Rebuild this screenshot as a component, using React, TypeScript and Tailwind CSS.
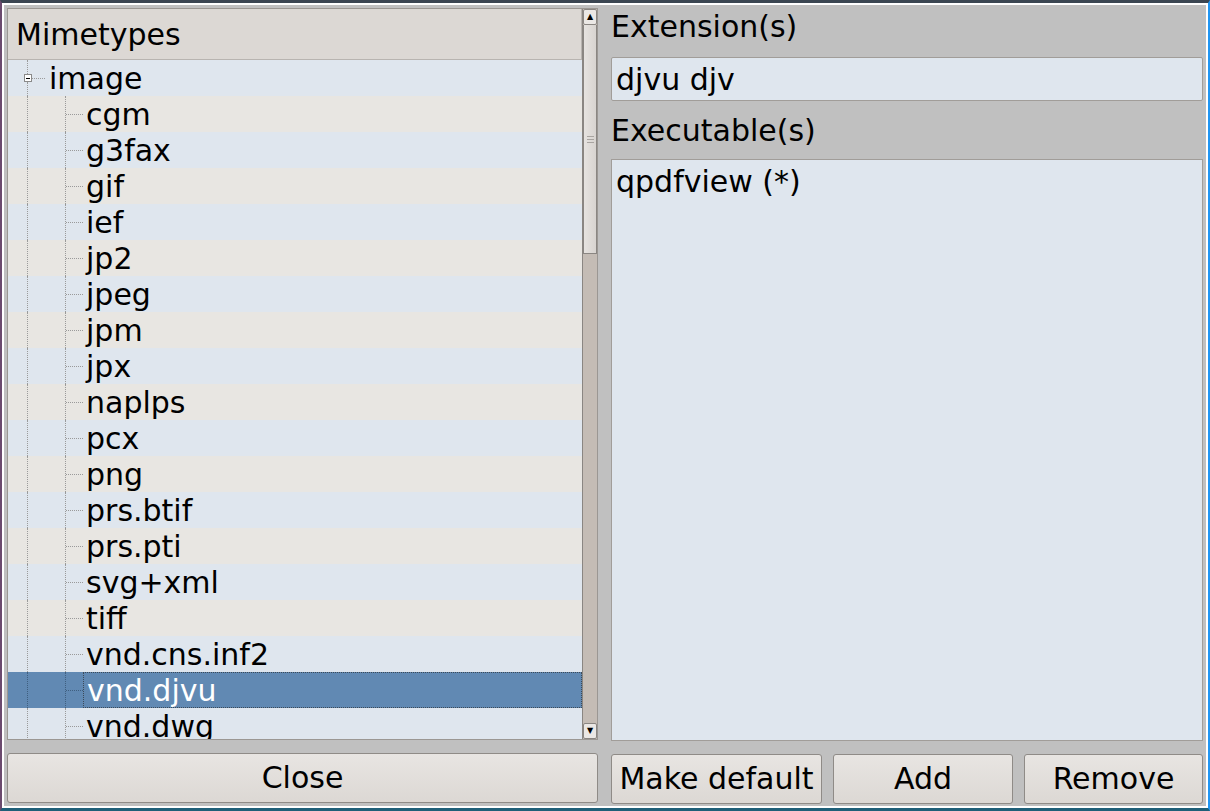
import React from "react";

const items = [
  "cgm",
  "g3fax",
  "gif",
  "ief",
  "jp2",
  "jpeg",
  "jpm",
  "jpx",
  "naplps",
  "pcx",
  "png",
  "prs.btif",
  "prs.pti",
  "svg+xml",
  "tiff",
  "vnd.cns.inf2",
  "vnd.djvu",
  "vnd.dwg",
];

const font = { fontFamily: '"DejaVu Sans", Verdana, sans-serif' };

const Button = ({ label, className }: { label: string; className?: string }) => (
  <button
    className={
      "h-[50px] rounded-[3px] border border-[#8f8b87] bg-gradient-to-b from-[#e8e5e2] to-[#dcd8d4] text-[30px] leading-none text-black " +
      (className || "")
    }
  >
    {label}
  </button>
);

const TreeRow = ({ label, index, selected }: { label: string; index: number; selected?: boolean }) => {
  const bg = selected ? "bg-[#6189b3]" : index % 2 === 0 ? "bg-[#dfe6ee]" : "bg-[#e8e6e2]";
  const line = selected ? "border-[#3f5f80]" : "border-[#9a9a9a]";
  return (
    <div className={"relative flex h-[36px] shrink-0 items-center " + bg}>
      {/* tree lines */}
      <span className={"absolute left-[19px] top-0 h-full border-l border-dotted " + line} />
      <span className={"absolute left-[57px] top-0 h-full border-l border-dotted " + line} />
      <span className={"absolute left-[58px] top-[18px] w-[17px] border-t border-dotted " + line} />
      <div
        className={
          "ml-[75px] flex h-full flex-1 items-center pl-[3px] text-[30px] " +
          (selected ? "border border-dotted border-[#3c4a58] text-white" : "text-black")
        }
      >
        {label}
      </div>
    </div>
  );
};

export default function App() {
  return (
    <div
      className="h-[811px] w-[1210px] overflow-hidden border-t-[3px] border-l-2 border-r-2 border-b-[3px] border-t-[#3b4652] border-l-[#6b4a6e] border-r-[#2196f3] border-b-[#1f5f78] bg-[#1f5f78]"
      style={font}
    >
      <div className="flex h-full w-full gap-[13px] border-2 border-white bg-[#c0c0c0] p-[3px] pb-[3px]">
        {/* left column */}
        <div className="flex w-[591px] shrink-0 flex-col gap-[13px]">
          <div className="flex h-[732px] overflow-hidden border border-[#9b9793]">
            <div className="flex flex-1 flex-col overflow-hidden">
              <div className="flex h-[51px] shrink-0 items-center border-b border-r border-[#b8b4b0] bg-[#dcd8d4] pl-[8px] text-[30px] text-black">
                Mimetypes
              </div>
              <div className="relative flex h-[36px] shrink-0 items-center bg-[#dfe6ee]">
                <span className="absolute left-[19px] top-0 h-[14px] border-l border-dotted border-[#9a9a9a]" />
                <span className="absolute left-[19px] top-[22px] h-[14px] border-l border-dotted border-[#9a9a9a]" />
                <span className="absolute left-[16px] top-[14px] flex h-[8px] w-[8px] items-center justify-center border border-[#8a8a8a] bg-white">
                  <span className="h-px w-[4px] bg-black" />
                </span>
                <span className="absolute left-[24px] top-[18px] w-[13px] border-t border-dotted border-[#9a9a9a]" />
                <div className="ml-[41px] text-[30px] text-black">image</div>
              </div>
              {items.map((it, i) => (
                <TreeRow key={it} label={it} index={i + 1} selected={it === "vnd.djvu"} />
              ))}
            </div>
            {/* scrollbar */}
            <div className="flex w-[15px] shrink-0 flex-col border-l border-[#8a8682] bg-[#c4bcb5]">
              <div className="flex h-[16px] shrink-0 items-center justify-center rounded-[2px] border border-[#8a8682] bg-[#ebe8e5] text-[8px] leading-none text-black">
                ▲
              </div>
              <div className="flex h-[229px] shrink-0 flex-col items-center justify-center gap-[2px] border-x border-b border-[#8a8682] bg-gradient-to-r from-[#e6e3e0] to-[#d8d4d0]">
                <span className="h-px w-[7px] bg-[#a8a4a0]" />
                <span className="h-px w-[7px] bg-[#a8a4a0]" />
                <span className="h-px w-[7px] bg-[#a8a4a0]" />
              </div>
              <div className="flex-1" />
              <div className="flex h-[16px] shrink-0 items-center justify-center rounded-[2px] border border-[#8a8682] bg-[#ebe8e5] text-[8px] leading-none text-black">
                ▼
              </div>
            </div>
          </div>
          <Button label="Close" className="w-full" />
        </div>

        {/* right column */}
        <div className="flex flex-1 flex-col">
          <div className="flex h-[37px] shrink-0 items-center text-[30px] text-black">Extension(s)</div>
          <div className="mt-[12px] flex h-[44px] shrink-0 items-center rounded-[2px] border border-[#a19d99] bg-[#dfe6ee] pl-[4px] text-[30px] text-black">
            djvu djv
          </div>
          <div className="mt-[11px] flex h-[36px] shrink-0 items-center text-[30px] text-black">
            Executable(s)
          </div>
          <div className="mt-[11px] flex h-[582px] shrink-0 flex-col border border-[#a19d99] bg-[#dfe6ee] pt-[3px]">
            <div className="flex h-[36px] items-center pl-[4px] text-[30px] text-black">qpdfview (*)</div>
          </div>
          <div className="mt-[13px] flex gap-[11px]">
            <Button label="Make default" className="w-[211px] shrink-0" />
            <Button label="Add" className="w-[180px] shrink-0" />
            <Button label="Remove" className="flex-1" />
          </div>
        </div>
      </div>
    </div>
  );
}
